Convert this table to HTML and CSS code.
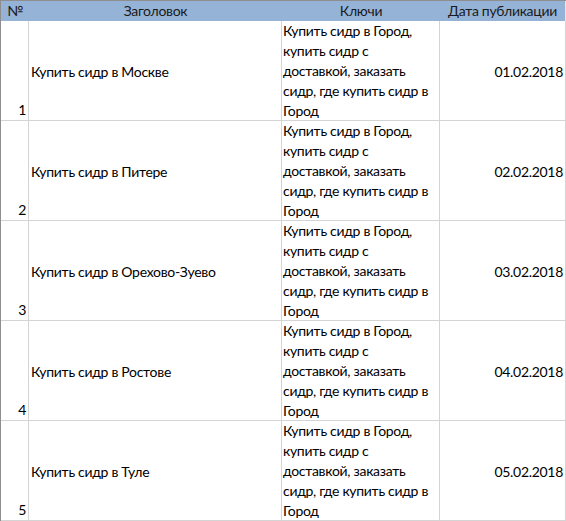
FILE: index.html
```html
<!DOCTYPE html>
<html lang="ru">
<head>
<meta charset="utf-8">
<title>Таблица</title>
<link rel="stylesheet" href="styles.css">
</head>
<body>
<div class="sheet">
  <div class="hd">№</div>
  <div class="hd">Заголовок</div>
  <div class="hd">Ключи</div>
  <div class="hd hd-last">Дата публикации</div>

  <div class="c num">1</div>
  <div class="c title">Купить сидр в Москве</div>
  <div class="c keys">Купить сидр в Город, купить сидр с доставкой, заказать сидр, где купить сидр в Город</div>
  <div class="c date">01.02.2018</div>

  <div class="c num">2</div>
  <div class="c title">Купить сидр в Питере</div>
  <div class="c keys">Купить сидр в Город, купить сидр с доставкой, заказать сидр, где купить сидр в Город</div>
  <div class="c date">02.02.2018</div>

  <div class="c num">3</div>
  <div class="c title">Купить сидр в Орехово-Зуево</div>
  <div class="c keys">Купить сидр в Город, купить сидр с доставкой, заказать сидр, где купить сидр в Город</div>
  <div class="c date">03.02.2018</div>

  <div class="c num">4</div>
  <div class="c title">Купить сидр в Ростове</div>
  <div class="c keys">Купить сидр в Город, купить сидр с доставкой, заказать сидр, где купить сидр в Город</div>
  <div class="c date">04.02.2018</div>

  <div class="c num">5</div>
  <div class="c title">Купить сидр в Туле</div>
  <div class="c keys">Купить сидр в Город, купить сидр с доставкой, заказать сидр, где купить сидр в Город</div>
  <div class="c date">05.02.2018</div>
</div>
</body>
</html>
```
FILE: styles.css
```css
html, body {
  margin: 0;
  padding: 0;
  background: #ffffff;
}

body {
  font-family: Lato, "Open Sans", "Liberation Sans", sans-serif;
  font-size: 14px;
  letter-spacing: -0.3px;
  color: #000000;
}

.sheet {
  display: grid;
  grid-template-columns: 28px 253px 158px 126px;
  grid-template-rows: 20px repeat(5, 100px);
  width: 566px;
  border-top: 1px solid #8e8e8e;
  border-left: 1px solid #8e8e8e;
  box-sizing: border-box;
}

.hd {
  background: #95b3d7;
  color: #1a1a1a;
  line-height: 20px;
  text-align: center;
  white-space: nowrap;
  overflow: visible;
}

.hd-last {
  border-right: 1px solid #dfe6f0;
}

.c {
  box-sizing: border-box;
  border-right: 1px solid #d4d4d4;
  border-bottom: 1px solid #d4d4d4;
  line-height: 20px;
  overflow: hidden;
}

.num {
  display: flex;
  align-items: flex-end;
  justify-content: flex-end;
  padding: 0 2px 0 0;
}

.title {
  display: flex;
  align-items: center;
  padding: 2px 2px 0 2px;
}

.keys {
  padding: 0 2px 0 1px;
  overflow: visible;
}

.date {
  display: flex;
  align-items: center;
  justify-content: flex-end;
  padding: 2px 2px 0 0;
}
```
